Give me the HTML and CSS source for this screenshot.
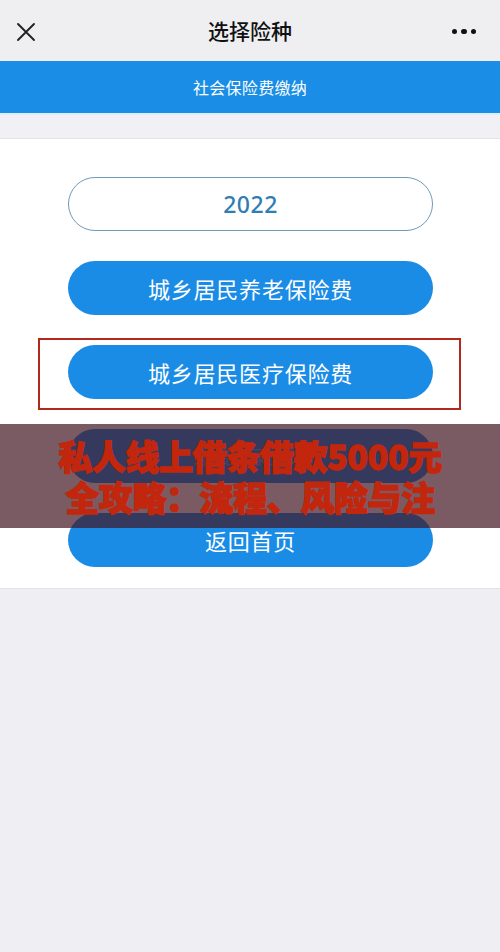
FILE: index.html
```html
<!DOCTYPE html>
<html lang="zh-CN">
<head>
<meta charset="utf-8">
<title>选择险种</title>
<link rel="stylesheet" href="styles.css">
</head>
<body>
<div class="app">
  <header class="nav">
    <svg class="nav-close" width="20" height="20" viewBox="0 0 20 20" aria-hidden="true">
      <path d="M2 2 L18 18 M18 2 L2 18" stroke="#222" stroke-width="1.9" stroke-linecap="round" fill="none"/>
    </svg>
    <h1 class="nav-title">选择险种</h1>
    <div class="nav-more"><i></i><i></i><i></i></div>
  </header>

  <div class="banner">社会保险费缴纳</div>
  <div class="gap"></div>

  <main class="panel">
    <div class="pill pill-outline">2022</div>
    <div class="pill">城乡居民养老保险费</div>
    <div class="marked">
      <div class="pill">城乡居民医疗保险费</div>
    </div>
    <div class="pill pill-muted">缴费记录查询</div>
    <div class="pill">返回首页</div>

    <div class="promo">
      <p>私人线上借条借款5000元</p>
      <p>全攻略：流程、风险与注</p>
    </div>
  </main>
</div>
</body>
</html>
```

FILE: styles.css
```css
* { box-sizing: border-box; margin: 0; padding: 0; }

html, body {
  width: 500px;
  height: 952px;
  background: #efeff3;
  font-family: "Noto Sans CJK SC", "Noto Sans", sans-serif;
}

.app { display: flex; flex-direction: column; }

.nav {
  height: 61px;
  background: #efeff1;
  display: flex;
  align-items: center;
  justify-content: space-between;
  padding: 0 24px 0 16px;
  position: relative;
}

.nav-close { display: block; margin-top: 3px; }

.nav-title {
  position: absolute;
  left: 0; right: 0;
  text-align: center;
  font-size: 21px;
  font-weight: 500;
  color: #111;
  line-height: 61px;
  pointer-events: none;
}

.nav-more { display: flex; gap: 4px; margin-top: 2px; }
.nav-more i {
  display: block;
  width: 5.5px; height: 5.5px;
  border-radius: 50%;
  background: #111;
}

.banner {
  height: 52px;
  background: #1a8de6;
  color: #fff;
  font-size: 16px;
  display: flex;
  align-items: center;
  justify-content: center;
  letter-spacing: 0.3px;
}

.gap {
  height: 26px;
  background: #f1f0f4;
  border-top: 2px solid #dbeefc;
  border-bottom: 1px solid #e3e3e6;
}

.panel {
  position: relative;
  background: #fff;
  padding: 38px 67px 21px 68px;
  display: flex;
  flex-direction: column;
  gap: 30px;
  border-bottom: 1px solid #e2e2e6;
}

.pill {
  height: 54px;
  border-radius: 27px;
  background: #1a8ce6;
  color: #fff;
  font-size: 22px;
  display: flex;
  align-items: center;
  justify-content: center;
  letter-spacing: 0.8px;
}

/* button sitting beneath the promo band; its label barely shows through */
.pill-muted { color: rgba(255, 255, 255, 0.35); font-size: 18px; }

.pill-outline {
  background: #fff;
  border: 1.5px solid #6f9ab6;
  color: #2f7db4;
  font-size: 23px;
  font-weight: 500;
  font-family: "Noto Sans", "Noto Sans CJK SC", sans-serif;
  letter-spacing: 0.5px;
}

.marked { position: relative; }
.marked::after {
  content: "";
  position: absolute;
  left: -30px; right: -28px;
  top: -7px; bottom: -11px;
  border: 2px solid #b1281d;
}

.promo {
  position: absolute;
  left: 0; right: 0;
  top: 285px;
  height: 104px;
  background: rgba(66, 22, 34, 0.7);
  display: flex;
  flex-direction: column;
  justify-content: center;
  align-items: center;
}

.promo p {
  color: #c2260c;
  font-size: 34px;
  font-weight: 900;
  line-height: 41px;
  letter-spacing: -0.4px;
  -webkit-text-stroke: 1.3px #c2260c;
}
```
